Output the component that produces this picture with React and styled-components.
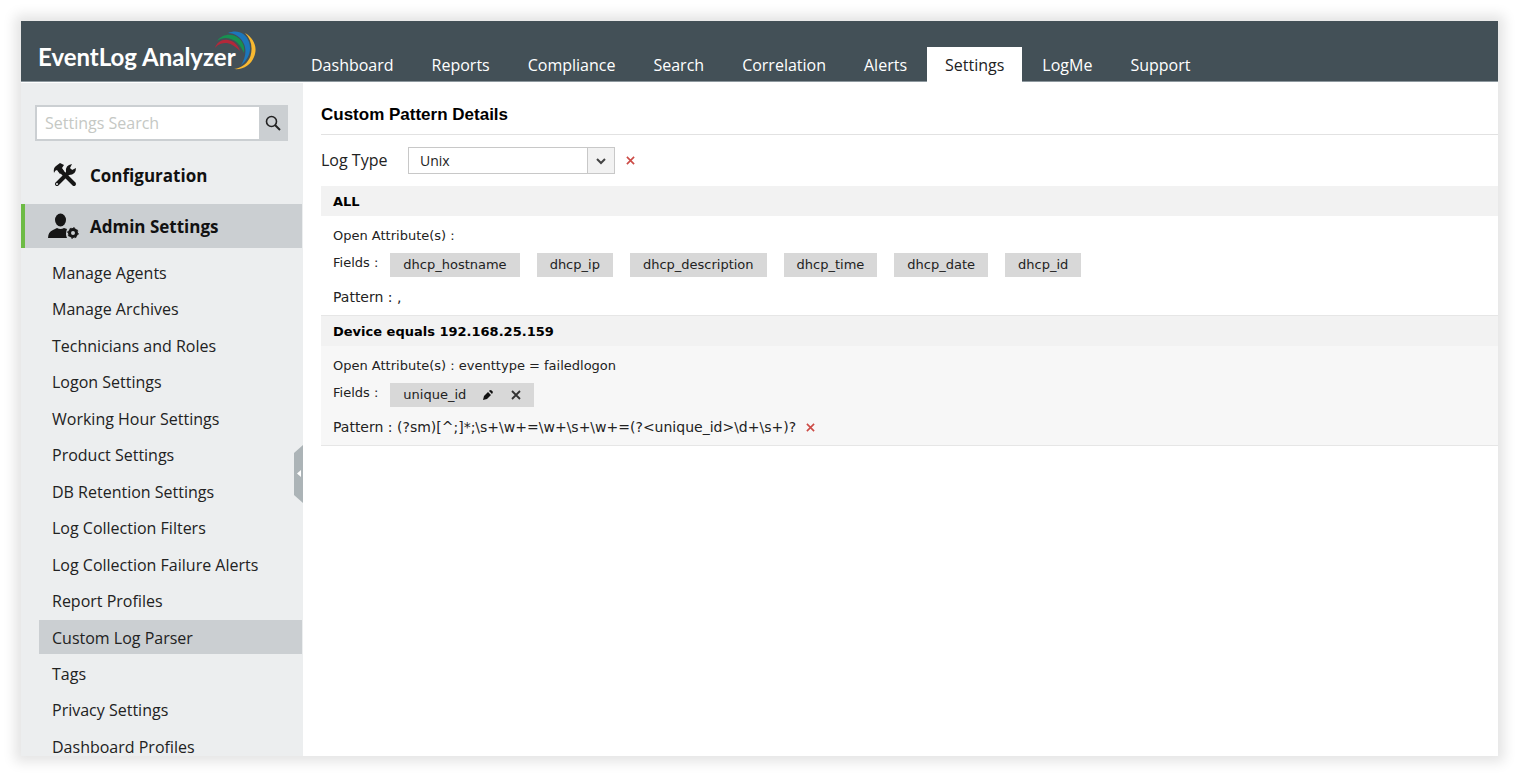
import styled, { createGlobalStyle } from 'styled-components';

const GlobalStyle = createGlobalStyle`
    * {
        box-sizing: border-box;
    }

    body {
        margin: 0;
        background: #fff;
        color: #222;
        font-family: 'Open Sans', sans-serif;
    }

    button {
        padding: 0;
        border: 0;
        background: none;
        font: inherit;
        cursor: pointer;
    }
`;

const Page = styled.div`
    height: 100vh;
    padding: 21px 21px 22px;
`;

const Frame = styled.div`
    display: flex;
    flex-direction: column;
    height: 100%;
    background: #fff;
    box-shadow: 0 0 12px 6px rgba(0, 0, 0, 0.11);
`;

const Header = styled.header`
    display: flex;
    align-items: stretch;
    height: 61px;
    flex-shrink: 0;
    background: #435057;
    border-bottom: 1px solid #8d989e;
`;

const Brand = styled.a`
    display: flex;
    width: 272px;
    padding-left: 17px;
    color: #fff;
    font-family: Lato, sans-serif;
    font-size: 24px;
    font-weight: 700;
    line-height: 72px;
    white-space: nowrap;
    text-decoration: none;

    svg {
        margin: 9px 0 0 -22px;
    }
`;

const Nav = styled.nav`
    display: flex;
    align-items: flex-end;
    gap: 2px;
    margin-bottom: -1px;
`;

const NavLink = styled.a`
    height: 35px;
    padding: 0 18px;
    background: ${(props) => (props.$active ? '#fff' : 'transparent')};
    color: ${(props) => (props.$active ? '#222' : '#fff')};
    font-size: 16px;
    line-height: 36px;
    text-decoration: none;
`;

const Body = styled.div`
    display: flex;
    flex: 1;
    min-height: 0;
    padding-top: 1px;
`;

const Sidebar = styled.aside`
    position: relative;
    display: flex;
    flex-direction: column;
    width: 282px;
    flex-shrink: 0;
    padding: 22px 1px 0 0;
    overflow: hidden;
    background: #eceeef;
`;

const SearchBox = styled.form`
    display: flex;
    height: 36px;
    flex-shrink: 0;
    margin: 0 14px;
    border: 2px solid #cbcfd2;

    input {
        flex: 1;
        min-width: 0;
        padding: 0 8px;
        border: 0;
        outline: 0;
        background: #fff;
        font-family: inherit;
        font-size: 16px;
    }

    input::placeholder {
        color: #c5c8c4;
    }

    button {
        width: 27px;
        background: #cbcfd2;
    }

    svg {
        display: block;
        margin: auto;
    }
`;

const Section = styled.a`
    display: flex;
    align-items: center;
    gap: 11px;
    height: 44px;
    flex-shrink: 0;
    margin-top: ${(props) => (props.$active ? '7px' : '12px')};
    padding-left: 22px;
    border-left: 4px solid ${(props) => (props.$active ? '#6dbb45' : 'transparent')};
    background: ${(props) => (props.$active ? '#cbcfd2' : 'transparent')};
    color: #111;
    font-size: 17px;
    font-weight: 700;
    text-decoration: none;
`;

/* rows share out the height left under the section headings, the last one runs off the edge */
const SubMenu = styled.ul`
    display: flex;
    flex: 1;
    flex-direction: column;
    justify-content: space-between;
    margin: 7px 0 -7px 18px;
    padding: 0;
    list-style: none;
`;

const SubLink = styled.a`
    display: block;
    height: 34px;
    padding-left: 13px;
    background: ${(props) => (props.$active ? '#cbcfd2' : 'transparent')};
    color: #222;
    font-size: 16px;
    line-height: 36px;
    text-decoration: none;
`;

const Collapse = styled.button`
    position: absolute;
    right: 0;
    top: 362px;
    width: 9px;
    height: 58px;

    svg {
        display: block;
    }
`;

const Content = styled.main`
    flex: 1;
    min-width: 0;
    padding: 17px 0 0 18px;
`;

const Title = styled.h1`
    margin: 0;
    padding-bottom: 4px;
    border-bottom: 1px solid #e2e2e2;
    color: #000;
    font-family: 'Liberation Sans', Arial, sans-serif;
    font-size: 17px;
    line-height: 30px;
`;

const LogType = styled.div`
    display: flex;
    align-items: center;
    margin: 12px 0;
    font-size: 16px;

    label {
        width: 87px;
        line-height: 24px;
        padding-bottom: 2px;
    }
`;

const SelectBox = styled.div`
    display: flex;
    width: 207px;
    height: 27px;
    margin-right: 11px;
    border: 1px solid #c8c8c8;
    background: linear-gradient(#f2f2f2, #f2f2f2) right / 27px no-repeat;

    select {
        flex: 1;
        appearance: none;
        padding: 0 11px;
        border: 0;
        border-right: 1px solid #c8c8c8;
        border-radius: 0;
        outline: 0;
        background: #fff;
        color: #222;
        font-family: inherit;
        font-size: 14px;
    }

    svg {
        width: 26px;
        margin: auto 0;
        pointer-events: none;
    }
`;

const Group = styled.section`
    border-bottom: 1px solid #e6e6e6;
    background: ${(props) => (props.$shaded ? '#f7f7f7' : '#fff')};
    color: #222;
    font-family: 'DejaVu Sans', Verdana, sans-serif;
    font-size: 13px;
`;

const GroupTitle = styled.h2`
    height: 30px;
    margin: 0;
    padding-left: 12px;
    background: #f2f2f2;
    color: #000;
    font-size: 13px;
    line-height: 32px;
`;

const GroupBody = styled.div`
    padding: 11px 12px 9px;
`;

const Line = styled.div`
    display: flex;
    align-items: center;
    gap: 10px;
    line-height: 18px;
`;

const PatternLine = styled(Line)`
    font-size: 14px;
`;

const Fields = styled.div`
    display: flex;
    gap: 12px;
    margin: 8px 0 11px;
    line-height: 20px;
`;

const Chips = styled.div`
    display: flex;
    flex-wrap: wrap;
    gap: 17px;
`;

const Chip = styled.span`
    display: flex;
    align-items: center;
    gap: 17px;
    height: 24px;
    padding: 0 13px;
    background: #d8d8d8;
`;

const IconButton = styled.button`
    display: flex;
`;

const NAV = [
    'Dashboard',
    'Reports',
    'Compliance',
    'Search',
    'Correlation',
    'Alerts',
    'Settings',
    'LogMe',
    'Support',
];

const ADMIN_LINKS = [
    'Manage Agents',
    'Manage Archives',
    'Technicians and Roles',
    'Logon Settings',
    'Working Hour Settings',
    'Product Settings',
    'DB Retention Settings',
    'Log Collection Filters',
    'Log Collection Failure Alerts',
    'Report Profiles',
    'Custom Log Parser',
    'Tags',
    'Privacy Settings',
    'Dashboard Profiles',
];

const DHCP_FIELDS = ['dhcp_hostname', 'dhcp_ip', 'dhcp_description', 'dhcp_time', 'dhcp_date', 'dhcp_id'];

function Cross({ color, size = 10 }) {
    return (
        <svg width={size} height={size} viewBox="0 0 10 10" stroke={color} strokeWidth="1.8">
            <path d="M1 1l8 8M9 1l-8 8" />
        </svg>
    );
}

function LogoArcs() {
    return (
        <svg width="44" height="42" viewBox="0 0 44 42">
            <path d="M31 3C40 8 44 18 40 27C37 35 29 40 20 39C28 38 34 33 36.500 26C39 17 37 9 31 3Z" fill="#f9b931" />
            <path d="M14 3C23-1 32 3 35 12C38 21 34 30 27 35C31 29 33 21 30 14C27 7 21 3 14 3Z" fill="#1c76bb" />
            <path d="M3 11C8 4 17 3 23 7C29 11 31 17 30 23C27 16 23 11 17 9C12 7 7 8 3 11Z" fill="#179150" />
            <path d="M1 18C3 12 8 9 14 10C20 11 24 15 26 21C22 17 18 14 13 13C8 13 4 14 1 18Z" fill="#b3283a" />
        </svg>
    );
}

function ToolsIcon() {
    return (
        <svg width="32" height="26" viewBox="0 0 32 26">
            <path d="M7 11Q6 6 9 4L13 1l4 2-2 3 2 3-4 3-3-4q-2 0-3 3z" fill="#161616" />
            <path d="M13 8l14 14" stroke="#161616" strokeWidth="4" strokeLinecap="round" />
            <path d="M23 9l-13 13" stroke="#161616" strokeWidth="4" strokeLinecap="round" />
            <path d="M19 10q-1-7 6-8l-2 4 2 2 4-2q0 7-7 7z" fill="#161616" />
            <circle cx="10" cy="22" r="1" fill="#eceeef" />
        </svg>
    );
}

function AdminIcon() {
    return (
        <svg width="32" height="26" viewBox="0 0 32 26" fill="#161616">
            <ellipse cx="13.500" cy="7" rx="5.5" ry="6.500" />
            <path d="M1 25q0-6 5-8l4-2q3.500 2 7 0l3 1q-2 5 0 9z" />
            <circle cx="26" cy="20" r="3.5" fill="none" stroke="#161616" strokeWidth="3" />
            <circle cx="26" cy="20" r="5.200" fill="none" stroke="#161616" strokeWidth="1" strokeDasharray="2 2" />
        </svg>
    );
}

function App() {
    return (
        <>
            <GlobalStyle />
            <Page>
                <Frame>
                    <Header>
                        <Brand href="#home">
                            EventLog Analyzer
                            <LogoArcs />
                        </Brand>
                        <Nav>
                            {NAV.map((name) => (
                                <NavLink key={name} href={`#${name}`} $active={name === 'Settings'}>
                                    {name}
                                </NavLink>
                            ))}
                        </Nav>
                    </Header>
                    <Body>
                        <Sidebar>
                            <SearchBox>
                                <input type="text" aria-label="Settings Search" placeholder="Settings Search" />
                                <button type="button" aria-label="Search">
                                    <svg width="16" height="16" viewBox="0 0 16 16" fill="none" stroke="#222">
                                        <circle cx="6.500" cy="6.500" r="5" strokeWidth="1.6" />
                                        <path d="M10 10l5 5" strokeWidth="2" />
                                    </svg>
                                </button>
                            </SearchBox>
                            <Section href="#configuration">
                                <ToolsIcon />
                                Configuration
                            </Section>
                            <Section href="#admin" $active>
                                <AdminIcon />
                                Admin Settings
                            </Section>
                            <SubMenu>
                                {ADMIN_LINKS.map((name) => (
                                    <li key={name}>
                                        <SubLink href="#admin" $active={name === 'Custom Log Parser'}>
                                            {name}
                                        </SubLink>
                                    </li>
                                ))}
                            </SubMenu>
                            <Collapse aria-label="Collapse sidebar">
                                <svg width="9" height="58" viewBox="0 0 9 58">
                                    <path d="M9 0L0 8v42l9 8z" fill="#acb4b7" />
                                    <path d="M7 25v7l-4-3.500z" fill="#fff" />
                                </svg>
                            </Collapse>
                        </Sidebar>
                        <Content>
                            <Title>Custom Pattern Details</Title>
                            <LogType>
                                <label htmlFor="logType">Log Type</label>
                                <SelectBox>
                                    <select id="logType">
                                        <option>Unix</option>
                                    </select>
                                    <svg height="8" viewBox="0 0 26 8" fill="none" stroke="#444" strokeWidth="2">
                                        <path d="M9 2l4 4 4-4" />
                                    </svg>
                                </SelectBox>
                                <IconButton aria-label="Delete log type">
                                    <Cross color="#cc4b46" size={9} />
                                </IconButton>
                            </LogType>
                            <Group>
                                <GroupTitle>ALL</GroupTitle>
                                <GroupBody>
                                    <Line>Open Attribute(s) :</Line>
                                    <Fields>
                                        Fields :
                                        <Chips>
                                            {DHCP_FIELDS.map((field) => (
                                                <Chip key={field}>{field}</Chip>
                                            ))}
                                        </Chips>
                                    </Fields>
                                    <PatternLine>Pattern : ,</PatternLine>
                                </GroupBody>
                            </Group>
                            <Group $shaded>
                                <GroupTitle>Device equals 192.168.25.159</GroupTitle>
                                <GroupBody>
                                    <Line>Open Attribute(s) : eventtype = failedlogon</Line>
                                    <Fields>
                                        Fields :
                                        <Chips>
                                            <Chip>
                                                unique_id
                                                <IconButton aria-label="Edit field">
                                                    <svg width="11" height="10" viewBox="0 0 11 10" fill="#111">
                                                        <path d="M0 10l1-4 4-4 3 3-4 4zM6 1l1-1q2 0 3 2L9 4z" />
                                                    </svg>
                                                </IconButton>
                                                <IconButton aria-label="Remove field">
                                                    <Cross color="#333" />
                                                </IconButton>
                                            </Chip>
                                        </Chips>
                                    </Fields>
                                    <PatternLine>
                                        {'Pattern : (?sm)[^;]*;\\s+\\w+=\\w+\\s+\\w+=(?<unique_id>\\d+\\s+)?'}
                                        <IconButton aria-label="Delete pattern">
                                            <Cross color="#cc4b46" size={9} />
                                        </IconButton>
                                    </PatternLine>
                                </GroupBody>
                            </Group>
                        </Content>
                    </Body>
                </Frame>
            </Page>
        </>
    );
}

export default App;
